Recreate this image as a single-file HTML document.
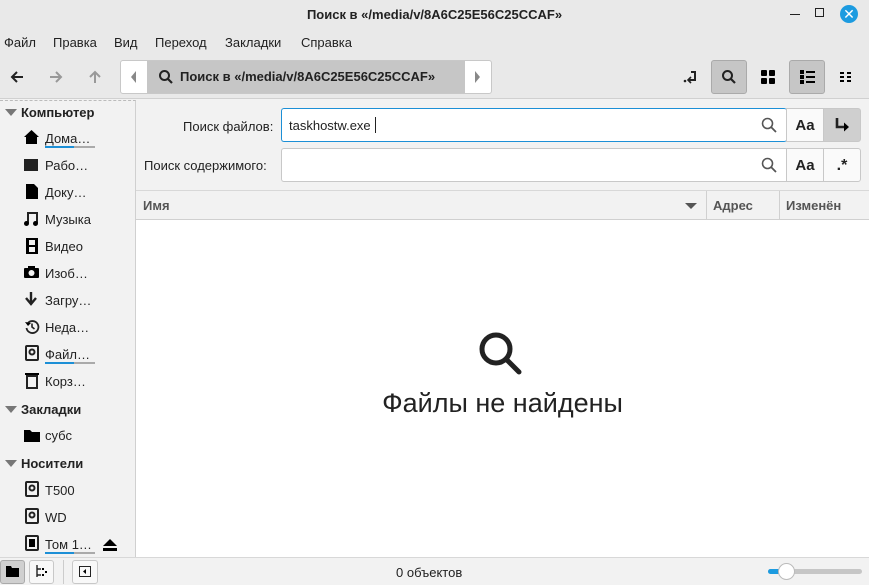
<!DOCTYPE html>
<html><head><meta charset="utf-8"><style>
*{box-sizing:border-box;margin:0;padding:0}
body{width:869px;height:585px;overflow:hidden;background:#f2f2f2;font-family:"Liberation Sans","DejaVu Sans",sans-serif;font-size:13px;color:#222;position:relative}
.abs{position:absolute}
.title{left:0;top:0;width:869px;height:30px;background:#e9e9e9;text-align:center;font-weight:bold;line-height:30px;font-size:13px}
.menu{left:0;top:30px;width:869px;height:26px;background:#e9e9e9}
.menu span{position:absolute;top:5px}
.tool{left:0;top:56px;width:869px;height:43px;background:#e9e9e9;border-bottom:1px solid #d0d0d0}
.side{left:0;top:100px;width:136px;height:457px;background:#f2f2f2;border-right:1px solid #d0d0d0;border-top:1px dashed #bbb}
.side .it{position:absolute;left:45px;font-size:13px}
.side .hd{position:absolute;left:21px;font-weight:bold}
.tri{position:absolute;left:5px;width:0;height:0;border-left:6px solid transparent;border-right:6px solid transparent;border-top:7px solid #777}
.ic{position:absolute;left:24px;width:14px;height:14px;background:#222}
.u{position:absolute;left:45px;height:2px;width:50px;background:#aaa}
.u:before{content:"";position:absolute;left:0;top:0;width:29px;height:2px;background:#1c8fd6}
.inp{background:#fff;border:1px solid #c8c8c8;border-radius:3px}
.btn{border:1px solid #c8c8c8;background:#fafafa;text-align:center;font-weight:bold;font-size:15px}
</style></head><body>
<div class="abs title">Поиск в «/media/v/8A6C25E56C25CCAF»</div>
<div class="abs" style="left:790px;top:14px;width:10px;height:1px;background:#222"></div>
<div class="abs" style="left:815px;top:8px;width:9px;height:9px;border:1.5px solid #222"></div>
<div class="abs" style="left:840px;top:5px;width:18px;height:18px;border-radius:50%;background:#1c9be0;color:#fff;text-align:center;line-height:18px;font-size:14px">✕</div>
<div class="abs menu"><span style="left:4px">Файл</span><span style="left:53px">Правка</span><span style="left:114px">Вид</span><span style="left:155px">Переход</span><span style="left:225px">Закладки</span><span style="left:301px">Справка</span></div>
<div class="abs tool">
<svg class="abs" style="left:10px;top:14px" width="14" height="14"><path d="M13 7H2M7 2L2 7l5 5" fill="none" stroke="#222" stroke-width="2"/></svg>
<svg class="abs" style="left:49px;top:14px" width="14" height="14"><path d="M1 7h11M7 2l5 5-5 5" fill="none" stroke="#999" stroke-width="2"/></svg>
<svg class="abs" style="left:88px;top:14px" width="14" height="14"><path d="M7 13V2M2 7l5-5 5 5" fill="none" stroke="#999" stroke-width="2"/></svg>
<div class="abs" style="left:120px;top:4px;width:372px;height:34px;background:#fff;border:1px solid #c8c8c8;border-radius:3px"></div>
<div class="abs" style="left:147px;top:5px;width:318px;height:32px;background:#c6c6c6"></div>
<div class="abs" style="left:131px;top:15px;border-top:6px solid transparent;border-bottom:6px solid transparent;border-right:5px solid #888"></div>
<div class="abs" style="left:475px;top:15px;border-top:6px solid transparent;border-bottom:6px solid transparent;border-left:5px solid #888"></div>
<svg class="abs" style="left:158px;top:13px" width="16" height="16"><circle cx="6.5" cy="6.5" r="4.5" fill="none" stroke="#222" stroke-width="2"/><path d="M10 10l4 4" stroke="#222" stroke-width="2.2"/></svg>
<span class="abs" style="left:180px;top:13px;font-weight:bold">Поиск в «/media/v/8A6C25E56C25CCAF»</span>
<svg class="abs" style="left:682px;top:12px" width="18" height="18"><path d="M9 4h4v8H7" fill="none" stroke="#222" stroke-width="2"/><path d="M9 9l-3 3 3 3" fill="none" stroke="#222" stroke-width="1.6"/><circle cx="3" cy="13" r="1.3" fill="#222"/></svg>
<div class="abs" style="left:711px;top:4px;width:36px;height:34px;background:#c6c6c6;border:1px solid #aaa;border-radius:3px"></div>
<svg class="abs" style="left:721px;top:13px" width="16" height="16"><circle cx="6.5" cy="6.5" r="4.5" fill="none" stroke="#222" stroke-width="2"/><path d="M10 10l4 4" stroke="#222" stroke-width="2.2"/></svg>
<svg class="abs" style="left:761px;top:14px" width="14" height="14"><rect x="0" y="0" width="6" height="6" rx="1"/><rect x="8" y="0" width="6" height="6" rx="1"/><rect x="0" y="8" width="6" height="6" rx="1"/><rect x="8" y="8" width="6" height="6" rx="1"/></svg>
<div class="abs" style="left:789px;top:4px;width:36px;height:34px;background:#c6c6c6;border:1px solid #aaa;border-radius:3px"></div>
<svg class="abs" style="left:800px;top:14px" width="15" height="14"><rect x="0" y="0" width="4" height="4"/><rect x="0" y="5" width="4" height="4"/><rect x="0" y="10" width="4" height="4"/><rect x="6" y="1" width="9" height="2"/><rect x="6" y="6" width="9" height="2"/><rect x="6" y="11" width="9" height="2"/></svg>
<svg class="abs" style="left:840px;top:16px" width="12" height="11"><rect x="0" y="0" width="4" height="2"/><rect x="7" y="0" width="4" height="2"/><rect x="0" y="4" width="4" height="2"/><rect x="7" y="4" width="4" height="2"/><rect x="0" y="8" width="4" height="2"/><rect x="7" y="8" width="4" height="2"/></svg>
</div>

<div class="abs side">
<div class="tri" style="top:8px"></div><span class="hd" style="top:4px">Компьютер</span>
<svg class="abs" style="left:24px;top:29px" width="15" height="14"><path d="M7.5 0L15 7h-2v7H2V7H0z"/></svg><span class="it" style="top:30px">Дома…</span><div class="u" style="top:45px"></div>
<div class="ic" style="top:58px;height:12px"></div><span class="it" style="top:57px">Рабо…</span>
<svg class="abs" style="left:26px;top:83px" width="12" height="15"><path d="M0 0h8l4 4v11H0z"/></svg><span class="it" style="top:84px">Доку…</span>
<svg class="abs" style="left:24px;top:110px" width="15" height="15"><path d="M4 12V2h9v10" fill="none" stroke="#222" stroke-width="2"/><circle cx="2.5" cy="12.5" r="2.5"/><circle cx="11.5" cy="12.5" r="2.5"/></svg><span class="it" style="top:111px">Музыка</span>
<svg class="abs" style="left:26px;top:137px" width="12" height="16"><rect x="0" y="0" width="12" height="16"/><rect x="3" y="2" width="6" height="5" fill="#f2f2f2"/><rect x="3" y="9" width="6" height="5" fill="#f2f2f2"/></svg><span class="it" style="top:138px">Видео</span>
<svg class="abs" style="left:24px;top:165px" width="15" height="12"><rect x="0" y="2" width="15" height="10" rx="1"/><rect x="4" y="0" width="7" height="3"/><circle cx="7.5" cy="7" r="3" fill="#f2f2f2"/></svg><span class="it" style="top:165px">Изоб…</span>
<svg class="abs" style="left:25px;top:191px" width="12" height="14"><path d="M6 0v10M1 6l5 6 5-6" fill="none" stroke="#222" stroke-width="2.4"/></svg><span class="it" style="top:192px">Загру…</span>
<svg class="abs" style="left:24px;top:218px" width="16" height="16"><path d="M4 4a6 6 0 1 1-1.5 5" fill="none" stroke="#222" stroke-width="1.8"/><path d="M1 3l3 4 3-3z"/><path d="M8 4.5V8l2.5 2" fill="none" stroke="#222" stroke-width="1.6"/></svg><span class="it" style="top:219px">Неда…</span>
<svg class="abs" style="left:25px;top:244px" width="14" height="16"><rect x="1" y="1" width="12" height="14" rx="1" fill="none" stroke="#222" stroke-width="2"/><circle cx="7" cy="7" r="2.5" fill="none" stroke="#222" stroke-width="2"/></svg><span class="it" style="top:246px">Файл…</span><div class="u" style="top:261px"></div>
<svg class="abs" style="left:25px;top:272px" width="14" height="16"><rect x="0" y="0" width="14" height="2"/><rect x="2" y="3" width="10" height="12" fill="none" stroke="#222" stroke-width="2"/></svg><span class="it" style="top:273px">Корз…</span>
<div class="tri" style="top:305px"></div><span class="hd" style="top:301px">Закладки</span>
<svg class="abs" style="left:24px;top:328px" width="16" height="13"><path d="M0 1h6l2 2h8v10H0z"/></svg><span class="it" style="top:327px">субс</span>
<div class="tri" style="top:359px"></div><span class="hd" style="top:355px">Носители</span>
<svg class="abs" style="left:25px;top:380px" width="14" height="16"><rect x="1" y="1" width="12" height="14" rx="1" fill="none" stroke="#222" stroke-width="2"/><circle cx="7" cy="7" r="2.5" fill="none" stroke="#222" stroke-width="2"/></svg><span class="it" style="top:382px">T500</span>
<svg class="abs" style="left:25px;top:407px" width="14" height="16"><rect x="1" y="1" width="12" height="14" rx="1" fill="none" stroke="#222" stroke-width="2"/><circle cx="7" cy="7" r="2.5" fill="none" stroke="#222" stroke-width="2"/></svg><span class="it" style="top:409px">WD</span>
<svg class="abs" style="left:25px;top:434px" width="14" height="16"><rect x="1" y="1" width="12" height="14" rx="1" fill="none" stroke="#222" stroke-width="2"/><rect x="4" y="4" width="6" height="8"/></svg><span class="it" style="top:436px">Том 1…</span><div class="u" style="top:451px"></div>
<svg class="abs" style="left:102px;top:438px" width="16" height="12"><path d="M8 0l7 7H1z"/><rect x="1" y="9" width="14" height="3"/></svg>
</div>

<span class="abs" style="left:183px;top:119px">Поиск файлов:</span>
<div class="abs inp" style="left:281px;top:108px;width:506px;height:34px;border-color:#1c8fd6;border-width:1px 0 1px 1px"></div>
<span class="abs" style="left:289px;top:118px">taskhostw.exe</span><div class="abs" style="left:375px;top:117px;width:1px;height:16px;background:#222"></div>
<svg class="abs" style="left:761px;top:117px" width="16" height="16"><circle cx="6.5" cy="6.5" r="5" fill="none" stroke="#555" stroke-width="1.6"/><path d="M10 10l5 5" stroke="#555" stroke-width="1.8"/></svg>
<div class="abs btn" style="left:786px;top:108px;width:38px;height:34px;line-height:34px">Aa</div>
<div class="abs btn" style="left:823px;top:108px;width:38px;height:34px;background:#cfcfcf;border-radius:0 3px 3px 0"></div>
<svg class="abs" style="left:834px;top:117px" width="16" height="16"><path d="M3 1v9h8" fill="none" stroke="#222" stroke-width="2.6"/><path d="M10 5.5l5 4.5-5 4.5z"/></svg>
<span class="abs" style="left:144px;top:158px">Поиск содержимого:</span>
<div class="abs inp" style="left:281px;top:148px;width:506px;height:34px;border-right:none;border-radius:3px 0 0 3px"></div>
<svg class="abs" style="left:761px;top:157px" width="16" height="16"><circle cx="6.5" cy="6.5" r="5" fill="none" stroke="#555" stroke-width="1.6"/><path d="M10 10l5 5" stroke="#555" stroke-width="1.8"/></svg>
<div class="abs btn" style="left:786px;top:148px;width:38px;height:34px;line-height:34px">Aa</div>
<div class="abs btn" style="left:823px;top:148px;width:38px;height:34px;line-height:34px;border-radius:0 3px 3px 0;font-size:16px">.*</div>

<div class="abs" style="left:136px;top:190px;width:733px;height:30px;background:#f2f2f2;border-top:1px solid #d8d8d8;border-bottom:1px solid #d0d0d0"></div>
<span class="abs" style="left:143px;top:198px;font-weight:bold;color:#555">Имя</span>
<div class="abs" style="left:685px;top:203px;border-left:6px solid transparent;border-right:6px solid transparent;border-top:6px solid #555"></div>
<div class="abs" style="left:706px;top:191px;width:1px;height:28px;background:#d0d0d0"></div>
<span class="abs" style="left:713px;top:198px;font-weight:bold;color:#555">Адрес</span>
<div class="abs" style="left:779px;top:191px;width:1px;height:28px;background:#d0d0d0"></div>
<span class="abs" style="left:786px;top:198px;font-weight:bold;color:#555">Изменён</span>
<div class="abs" style="left:136px;top:220px;width:733px;height:337px;background:#fff"></div>
<svg class="abs" style="left:477px;top:330px" width="48" height="48"><circle cx="19" cy="19" r="14" fill="none" stroke="#222" stroke-width="5"/><path d="M30 30l12 12" stroke="#222" stroke-width="5" stroke-linecap="round"/></svg>
<div class="abs" style="left:136px;top:388px;width:733px;text-align:center;font-size:27px;color:#222">Файлы не найдены</div>

<div class="abs" style="left:0;top:557px;width:869px;height:28px;background:#f2f2f2;border-top:1px solid #d8d8d8"></div>
<div class="abs" style="left:0;top:560px;width:25px;height:24px;background:#d0d0d0;border:1px solid #aaa;border-radius:3px"></div>
<svg class="abs" style="left:6px;top:566px" width="13" height="11"><path d="M0 0h5l1 2h7v9H0z"/></svg>
<div class="abs" style="left:29px;top:560px;width:25px;height:24px;border:1px solid #c8c8c8;border-radius:3px;background:#f8f8f8"></div>
<svg class="abs" style="left:36px;top:565px" width="12" height="13"><path d="M1 0v12M1 4h4M1 10h4" stroke="#222" stroke-width="1.4" fill="none"/><rect x="6" y="3" width="2" height="2"/><rect x="6" y="9" width="2" height="2"/><rect x="9" y="6" width="2" height="2"/></svg>
<div class="abs" style="left:63px;top:560px;width:1px;height:24px;background:#ccc"></div>
<div class="abs" style="left:72px;top:560px;width:26px;height:24px;border:1px solid #c8c8c8;border-radius:3px;background:#f8f8f8"></div>
<svg class="abs" style="left:79px;top:566px" width="12" height="11"><rect x="0.5" y="0.5" width="11" height="10" fill="none" stroke="#222"/><path d="M7 3L4 5.5 7 8z"/></svg>
<span class="abs" style="left:396px;top:565px">0 объектов</span>
<div class="abs" style="left:768px;top:569px;width:94px;height:5px;border-radius:3px;background:#c6c6c6"></div>
<div class="abs" style="left:768px;top:569px;width:14px;height:5px;border-radius:3px;background:#1c9be0"></div>
<div class="abs" style="left:778px;top:563px;width:17px;height:17px;border-radius:50%;background:#fff;border:1px solid #bbb"></div>
</body></html>
